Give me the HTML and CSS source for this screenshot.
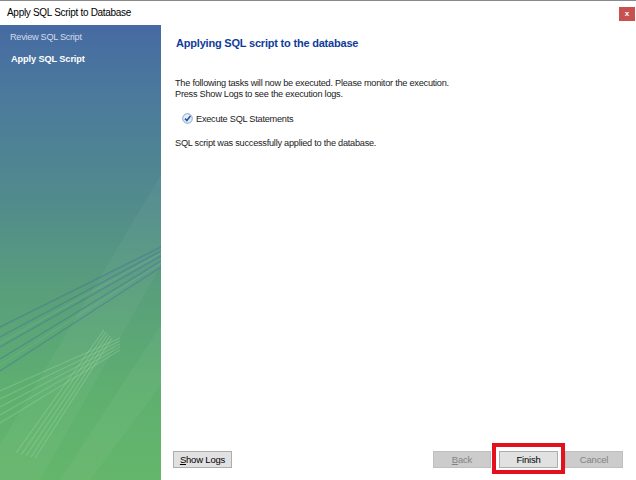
FILE: index.html
```html
<!DOCTYPE html>
<html lang="en">
<head>
  <meta charset="UTF-8">
  <title>Apply SQL Script to Database</title>
  <link rel="stylesheet" href="styles.css">
</head>
<body>

<div class="window">

  <!-- Title bar -->
  <div class="titlebar">
    <span class="title">Apply SQL Script to Database</span>
    <div class="close-btn">x</div>
  </div>

  <div class="main">

    <!-- Wizard steps -->
    <div class="sidebar">
      <svg class="sidebar-art" viewBox="0 0 161 455" preserveAspectRatio="none">
        <polygon points="161,150 161,240 40,455 0,455 0,420" fill="#ffffff" opacity="0.04"/>
        <polygon points="161,300 161,360 90,455 60,455" fill="#ffffff" opacity="0.04"/>
        <g stroke="#497596" stroke-width="1.4" opacity="0.5" fill="none">
          <line x1="161" y1="222" x2="0" y2="302"/>
          <line x1="161" y1="226" x2="0" y2="312"/>
          <line x1="161" y1="231" x2="0" y2="322"/>
          <line x1="161" y1="236" x2="0" y2="334"/>
          <line x1="161" y1="242" x2="0" y2="346"/>
        </g>
        <g stroke="#7fc2a0" stroke-width="1" opacity="0.3" fill="none">
          <line x1="161" y1="228" x2="0" y2="318"/>
          <line x1="161" y1="238" x2="0" y2="340"/>
        </g>
        <g stroke="#94d49a" stroke-width="1.2" opacity="0.4" fill="none">
          <line x1="120" y1="313" x2="0" y2="366"/>
          <line x1="120" y1="316" x2="0" y2="374"/>
          <line x1="120" y1="319" x2="0" y2="382"/>
          <line x1="120" y1="322" x2="0" y2="390"/>
          <line x1="120" y1="325" x2="0" y2="398"/>
        </g>
        <g stroke="#9ad89c" stroke-width="1.2" opacity="0.4" fill="none">
          <line x1="104" y1="305" x2="16" y2="428"/>
          <line x1="106" y1="307" x2="21" y2="430"/>
          <line x1="108" y1="309" x2="26" y2="431"/>
          <line x1="110" y1="311" x2="31" y2="432"/>
          <line x1="112" y1="313" x2="35" y2="433"/>
        </g>
      </svg>
      <div class="step">Review SQL Script</div>
      <div class="step step-active">Apply SQL Script</div>
    </div>

    <!-- Page content -->
    <div class="content">
      <h1>Applying SQL script to the database</h1>

      <p class="intro">
        The following tasks will now be executed. Please monitor the execution.<br>
        Press Show Logs to see the execution logs.
      </p>

      <div class="task">
        <svg class="task-icon" viewBox="0 0 11 11">
          <circle cx="5.5" cy="5.5" r="4.8" fill="#e6eef8" stroke="#7d9bc9" stroke-width="0.9"/>
          <path d="M3 5.6 L4.9 7.6 L8.4 2.9" fill="none" stroke="#2456ad" stroke-width="1.6"/>
        </svg>
        <span>Execute SQL Statements</span>
      </div>

      <p class="result">SQL script was successfully applied to the database.</p>

      <div class="buttons">
        <button class="btn"><u>S</u>how Logs</button>
        <div class="spacer"></div>
        <button class="btn btn-narrow" disabled><u>B</u>ack</button>
        <span class="highlight"><button class="btn">Finish</button></span>
        <button class="btn btn-narrow" disabled>Cancel</button>
      </div>
    </div>

  </div>
</div>

</body>
</html>
```

FILE: styles.css
```css
body {
  margin: 0;
  padding: 0;
  background-color: #fff;
  font-family: "Liberation Sans", Arial, sans-serif;
  font-size: 9.2px;
  color: #1b1b1b;
}

.window {
  width: 636px;
  height: 480px;
  box-sizing: border-box;
  border-top: 1px solid #8a8a8a;
  display: flex;
  flex-direction: column;
  overflow: hidden;
}

/* Title bar */
.titlebar {
  height: 24px;
  display: flex;
  align-items: flex-start;
  padding-left: 7px;
}

.title {
  font-size: 10px;
  letter-spacing: -0.3px;
  color: #000;
  margin-top: 6px;
}

.close-btn {
  margin-left: auto;
  margin-top: 6px;
  margin-right: 1px;
  width: 16px;
  height: 14px;
  background-color: #c75050;
  color: #fff;
  font-size: 8px;
  font-weight: bold;
  text-align: center;
  line-height: 13px;
}

.main {
  flex: 1;
  display: flex;
}

/* Sidebar */
.sidebar {
  width: 161px;
  position: relative;
  padding-top: 6px;
  background: linear-gradient(to bottom, #466aa2 0%, #4b7a9c 16%, #528c8b 40%, #59a07a 60%, #5fb06f 82%, #64b66b 100%);
}

.sidebar-art {
  position: absolute;
  top: 0;
  left: 0;
  width: 100%;
  height: 100%;
}

.step {
  position: relative;
  padding-left: 10px;
  height: 22px;
  line-height: 12px;
  color: #d3dcea;
  letter-spacing: -0.3px;
}

.step-active {
  color: #fff;
  font-weight: bold;
  padding-left: 11px;
  letter-spacing: -0.1px;
}

/* Content */
.content {
  flex: 1;
  display: flex;
  flex-direction: column;
  padding: 12px 13px 12px 14px;
}

h1 {
  font-size: 11px;
  font-weight: bold;
  color: #0f3c9c;
  margin: 0 0 28px 1px;
  letter-spacing: -0.2px;
}

.intro {
  margin: 1px 0 13px 0;
  line-height: 11px;
  letter-spacing: -0.25px;
}

.task {
  display: flex;
  align-items: center;
  gap: 3px;
  margin-left: 7px;
  letter-spacing: -0.25px;
}

.task-icon {
  width: 11px;
  height: 11px;
}

.result {
  margin: 14px 0 0 0;
  letter-spacing: -0.25px;
}

.buttons {
  margin-top: auto;
  margin-left: -2px;
  display: flex;
  align-items: center;
}

.spacer {
  flex: 1;
}

.btn {
  width: 59px;
  height: 17px;
  padding: 0;
  font-family: "Liberation Sans", Arial, sans-serif;
  font-size: 9.5px;
  letter-spacing: -0.2px;
  color: #000;
  background-color: #e1e1e1;
  border: 1px solid #adadad;
  border-radius: 0;
}

.btn-narrow {
  width: 58px;
}

.btn:disabled {
  background-color: #cccccc;
  border-color: #bfbfbf;
  color: #838383;
}

.btn u {
  text-decoration: underline;
}

/* red highlight around Finish */
.highlight {
  position: relative;
  margin: 0 7px 0 8px;
  display: flex;
}

.highlight::after {
  content: "";
  position: absolute;
  top: -8px;
  bottom: -6px;
  left: -7px;
  right: -7px;
  border: 4px solid #e3101e;
}
```
